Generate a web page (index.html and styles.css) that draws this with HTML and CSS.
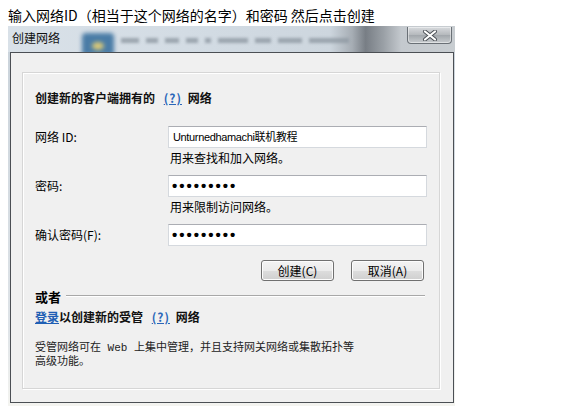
FILE: index.html
```html
<!DOCTYPE html>
<html lang="zh">
<head>
<meta charset="utf-8">
<title>创建网络</title>
<link rel="stylesheet" href="styles.css">
</head>
<body>
<div class="caption">输入网络ID（相当于这个网络的名字）和密码 然后点击创建</div>
<div class="window">
  <div class="titlebar">
    <span class="title">创建网络</span>
    <div class="glass">
      <span class="blur-icon"><i></i></span>
      <span class="blur-bar w18"></span>
      <span class="blur-bar w12"></span>
      <span class="blur-bar w14"></span>
      <span class="blur-bar w12"></span>
      <span class="blur-bar w6"></span>
      <span class="blur-bar w30"></span>
      <span class="blur-bar w16"></span>
      <span class="blur-bar w24"></span>
      <span class="blur-bar w40"></span>
    </div>
    <div class="close">
      <svg width="16" height="11" viewBox="0 0 16 11"><path d="M3 1.5 L13 9.5 M13 1.5 L3 9.5" stroke="#4a4f55" stroke-width="4" stroke-linecap="round"/><path d="M3 1.5 L13 9.5 M13 1.5 L3 9.5" stroke="#ffffff" stroke-width="2.2" stroke-linecap="round"/></svg>
    </div>
  </div>
  <div class="client">
    <div class="panel">
      <div class="heading">创建新的客户端拥有的 <a class="help">(?)</a> 网络</div>
      <div class="form">
        <div class="label">网络 ID:</div>
        <div class="field text">Unturnedhamachi联机教程</div>
        <div class="hint">用来查找和加入网络。</div>
        <div class="label">密码:</div>
        <div class="field dots">•••••••••</div>
        <div class="hint">用来限制访问网络。</div>
        <div class="label">确认密码(F):</div>
        <div class="field dots">•••••••••</div>
      </div>
      <div class="buttons">
        <button class="btn">创建(C)</button>
        <button class="btn">取消(A)</button>
      </div>
      <div class="or"><span class="or-text">或者</span><i class="rule"></i></div>
      <div class="login"><a class="link">登录</a>以创建新的受管 <a class="help">(?)</a> 网络</div>
      <p class="desc">受管网络可在 Web 上集中管理，并且支持网关网络或集散拓扑等<br>高级功能。</p>
    </div>
  </div>
</div>
</body>
</html>
```

FILE: styles.css
```css
* { box-sizing: border-box; }
body {
  margin: 0;
  background: #ffffff;
  font-family: "Noto Sans CJK SC", "Liberation Sans", sans-serif;
  color: #000;
}
.caption {
  height: 26px;
  padding: 4px 0 0 8px;
  font-size: 14px;
  line-height: 22px;
}
.window {
  margin-left: 8px;
  width: 447px;
  padding-bottom: 3px;
  background: linear-gradient(to bottom, #c9d2da, #dfe4e8 80%, #f4f4f0);
}
.titlebar {
  height: 26px;
  display: flex;
  align-items: flex-start;
  overflow: hidden;
  background: linear-gradient(to right, #d9e1e8 0%, #d3dce4 40%, #cdd6de 72%, #a6adb4 77%, #787e85 80%, #9aa0a6 84%, #c4c9ce 88%, #c8cdd1 100%);
}
.title {
  margin: 4px 0 0 4px;
  font-size: 12px;
  line-height: 16px;
  color: #111;
}
.glass {
  display: flex;
  align-items: flex-start;
  margin-left: 22px;
  height: 26px;
  width: 275px;
}
.blur-icon {
  margin-top: 7px;
  width: 32px;
  height: 22px;
  background: #4a7ca6;
  border-radius: 4px 4px 0 0;
  filter: blur(2px);
  display: flex;
  justify-content: center;
}
.blur-icon i {
  margin-top: 9px;
  width: 12px;
  height: 8px;
  border-radius: 50%;
  background: #d8c878;
}
.blur-bar {
  margin: 12px 0 0 7px;
  height: 5px;
  background: #8e98a2;
  filter: blur(1.6px);
  opacity: 0.8;
}
.w6 { width: 6px; }
.w12 { width: 12px; }
.w14 { width: 14px; }
.w16 { width: 16px; }
.w18 { width: 18px; }
.w24 { width: 24px; }
.w30 { width: 30px; }
.w40 { width: 40px; }
.close {
  margin: 1px 3px 0 auto;
  width: 45px;
  height: 17px;
  border: 1px solid #6a7076;
  border-top: 0;
  border-radius: 0 0 4px 4px;
  background: linear-gradient(to bottom, #d8dbde, #b4b8bc 50%, #a2a7ac 51%, #c7cbce);
  box-shadow: inset 0 0 0 1px rgba(255,255,255,0.45);
  display: flex;
  align-items: center;
  justify-content: center;
}
.client {
  margin: 0 1px 0 2px;
  border: 1px solid #4b4f54;
  background: #f0f0f0;
  padding: 19px 13px 13px 11px;
}
.panel {
  border: 1px solid #d6d6d6;
  box-shadow: 1px 1px 0 #ffffff, inset 1px 1px 0 #ffffff;
  background: #f0f0f0;
  padding: 18px 12px 19px 12px;
}
.heading {
  font-size: 12px;
  line-height: 14px;
  font-weight: bold;
  color: #111;
}
.help {
  color: #2a66b8;
  text-decoration: underline;
  letter-spacing: 1px;
  margin: 0 3px 0 6px;
}
.form {
  margin-top: 21px;
  display: grid;
  grid-template-columns: 133px 259px;
}
.label {
  grid-column: 1;
  font-size: 12px;
  line-height: 22px;
}
.field {
  grid-column: 2;
  height: 22px;
  border: 1px solid #d5d9de;
  border-top-color: #abadb3;
  background: #ffffff;
  padding-left: 4px;
  line-height: 20px;
}
.text {
  font-family: "Liberation Sans", "Noto Sans CJK SC", sans-serif;
  font-size: 11px;
  letter-spacing: -0.35px;
}
.dots {
  font-family: "Liberation Sans", sans-serif;
  font-size: 15px;
  font-weight: bold;
  letter-spacing: 2px;
  padding-left: 3px;
  line-height: 20px;
}
.hint {
  grid-column: 2;
  margin: 3px 0 10px;
  padding-left: 2px;
  font-size: 12px;
  line-height: 14px;
}
.buttons {
  margin-top: 14px;
  padding-right: 3px;
  display: flex;
  justify-content: flex-end;
  gap: 17px;
}
.btn {
  width: 73px;
  height: 21px;
  padding: 0;
  font-family: "Noto Sans CJK SC", sans-serif;
  font-size: 12px;
  line-height: 19px;
  color: #000;
  border: 1px solid #707070;
  border-radius: 3px;
  background: linear-gradient(to bottom, #f3f3f3 0%, #ebebeb 50%, #dddddd 51%, #cfcfcf 100%);
  box-shadow: inset 0 0 0 1px #fcfcfc;
}
.or {
  margin-top: 9px;
  height: 14px;
  display: flex;
  align-items: flex-start;
}
.or-text {
  font-size: 13px;
  line-height: 14px;
  font-weight: bold;
}
.rule {
  flex: 1;
  height: 1px;
  margin: 5px 2px 0 5px;
  background: #a8a8a8;
  box-shadow: 0 1px 0 #ffffff;
}
.login {
  margin-top: 6px;
  font-size: 12px;
  line-height: 14px;
  font-weight: bold;
  color: #111;
}
.link {
  color: #1f5fb4;
  text-decoration: underline;
}
.desc {
  margin: 17px 0 0;
  font-family: "Liberation Mono", "Noto Sans CJK SC", monospace;
  font-size: 11px;
  line-height: 14px;
  color: #222;
}
```
